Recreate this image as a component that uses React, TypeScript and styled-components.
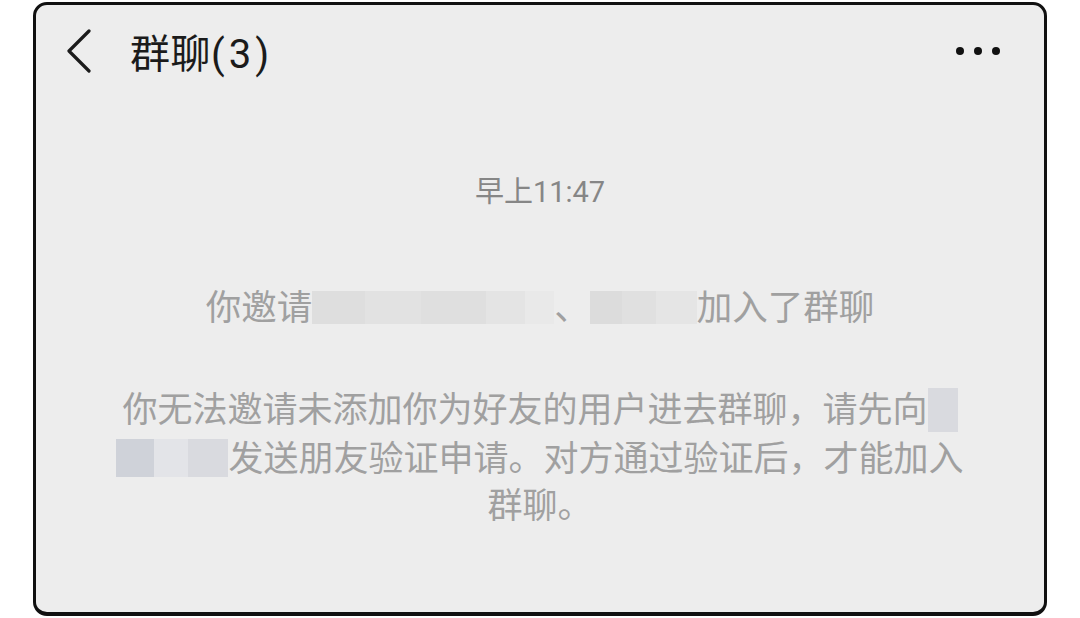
import React from 'react'
import styled, { createGlobalStyle } from 'styled-components'

const GlobalStyle = createGlobalStyle`
  html, body {
    margin: 0;
    padding: 0;
    background: #ffffff;
  }
  body {
    font-family: "Noto Sans CJK SC", "Noto Sans", sans-serif;
  }
`

const Page = styled.div`
  width: 1080px;
  height: 618px;
  padding: 2px 33px 2px 33px;
  box-sizing: border-box;
`

const Card = styled.div`
  height: 614px;
  box-sizing: border-box;
  border: 3px solid #111;
  border-bottom-width: 4px;
  border-radius: 14px;
  background: #ededed;
  display: flex;
  flex-direction: column;
  overflow: hidden;
`

const Header = styled.div`
  height: 92px;
  display: flex;
  align-items: center;
  padding: 0 44px 0 28px;
`

const BackButton = styled.button`
  width: 30px;
  height: 48px;
  padding: 0;
  border: none;
  background: none;
  display: flex;
  align-items: center;
  justify-content: center;
  margin-right: 36px;
`

const Title = styled.h1`
  margin: 0;
  font-size: 40px;
  font-weight: 400;
  color: #1b1b1b;
  letter-spacing: 0.5px;
  font-family: "Noto Sans CJK SC", sans-serif;
  flex: 1;
`

const Paren = styled.span`
  font-family: Roboto, "Noto Sans", sans-serif;
  font-size: 40px;
  letter-spacing: 4px;
`

const More = styled.div`
  display: flex;
  gap: 10px;
`

const Dot = styled.span`
  width: 8px;
  height: 8px;
  border-radius: 50%;
  background: #111;
`

const Body = styled.div`
  display: flex;
  flex-direction: column;
  align-items: center;
`

const Time = styled.div`
  margin-top: 77px;
  font-size: 29px;
  line-height: 36px;
  color: #868686;
  font-family: Roboto, "Noto Sans CJK SC", sans-serif;
`

const SystemLine = styled.div<{ $gap: number }>`
  margin-top: ${p => p.$gap}px;
  font-size: 35.5px;
  line-height: 44px;
  color: #a0a0a0;
  text-align: center;
  white-space: nowrap;
`

const Para = styled.div`
  margin-top: 56px;
  font-size: 35px;
  line-height: 47px;
  color: #a0a0a0;
  text-align: center;
  white-space: nowrap;
`

const Blur = styled.span<{ $w: number; $h: number; $bg: string }>`
  display: inline-block;
  width: ${p => p.$w}px;
  height: ${p => p.$h}px;
  background: ${p => p.$bg};
  vertical-align: middle;
  margin-top: -6px;
`

function Chevron() {
  return (
    <svg width="26" height="44" viewBox="0 0 26 44" fill="none">
      <path d="M23 2 L3 22 L23 42" stroke="#1b1b1b" strokeWidth="3.2" strokeLinecap="round" strokeLinejoin="round" />
    </svg>
  )
}

export default function App() {
  return (
    <>
      <GlobalStyle />
      <Page>
        <Card>
          <Header>
            <BackButton aria-label="返回">
              <Chevron />
            </BackButton>
            <Title>
              群聊<Paren>(3)</Paren>
            </Title>
            <More>
              <Dot />
              <Dot />
              <Dot />
            </More>
          </Header>
          <Body>
            <Time>早上11:47</Time>
            <SystemLine $gap={73}>
              你邀请
              <Blur
                $w={242}
                $h={33}
                $bg="linear-gradient(90deg, #dedede 0 22%, #e2e2e2 22% 45%, #dfdfdf 45% 72%, #e4e4e4 72% 88%, #e9e9e9 88%)"
              />
              、
              <Blur
                $w={107}
                $h={33}
                $bg="linear-gradient(90deg, #dcdcdc 0 30%, #e0e0e0 30% 62%, #e5e5e5 62%)"
              />
              加入了群聊
            </SystemLine>
            <Para>
              你无法邀请未添加你为好友的用户进去群聊，请先向
              <Blur $w={30} $h={44} $bg="#d9dadf" />
              <br />
              <Blur
                $w={112}
                $h={38}
                $bg="linear-gradient(90deg, #cfd2d9 0 34%, #e3e4e8 34% 64%, #d9dadf 64%)"
              />
              发送朋友验证申请。对方通过验证后，才能加入
              <br />
              群聊。
            </Para>
          </Body>
        </Card>
      </Page>
    </>
  )
}
